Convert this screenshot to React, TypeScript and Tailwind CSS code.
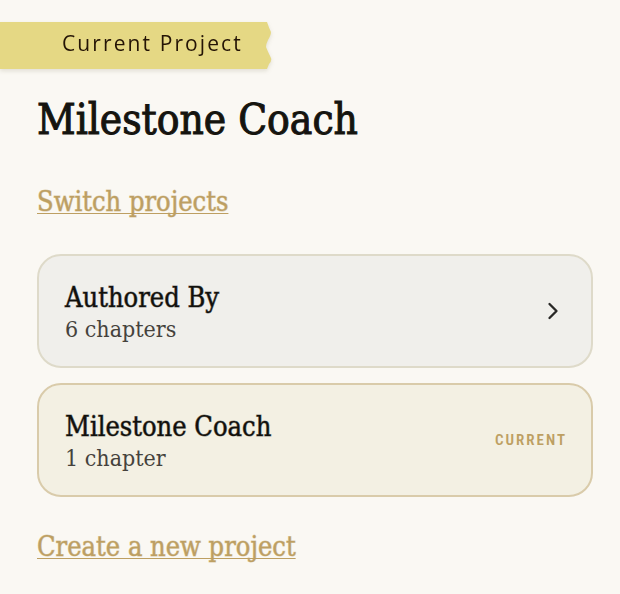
import { ChevronRight } from "lucide-react";

const serif = "font-['DejaVu_Serif_Condensed','DejaVu_Serif',serif]";

const linkClass =
  "self-start text-[27px] leading-9 text-[#bd9f62] underline decoration-[#bd9f62] decoration-1 underline-offset-2 [text-decoration-skip-ink:none] [-webkit-text-stroke:1px_#bd9f6280]";

type Project = { name: string; chapters: string; current: boolean };

const projects: Project[] = [
  { name: "Authored By", chapters: "6 chapters", current: false },
  { name: "Milestone Coach", chapters: "1 chapter", current: true },
];

function Tape() {
  return (
    <div className="grid h-12 w-[272px] items-center drop-shadow-[0_2px_2px_rgba(90,80,40,0.15)]">
      <svg
        className="col-start-1 row-start-1 h-12 w-full"
        viewBox="0 0 272 48"
        preserveAspectRatio="none"
        aria-hidden="true"
      >
        <path d="M0 0H267Q269 6 271 10Q271 13 268 18Q266 22 266 25Q268 30 271 36Q272 39 269 42L267 47H0Z" fill="#e5d884" />
      </svg>
      <p className="z-10 col-start-1 row-start-1 pb-1 pl-[62px] font-['Open_Sans',sans-serif] text-[21px] font-medium tracking-widest text-[#241405]">
        Current Project
      </p>
    </div>
  );
}

function ProjectCard({ project }: { project: Project }) {
  return (
    <button
      type="button"
      className={
        project.current
          ? "flex w-full items-center justify-between rounded-3xl border-2 border-[#d9cbaa] bg-[#f3f0e3] py-6 pr-6 pl-[26px] text-left"
          : "flex w-full items-center justify-between rounded-3xl border-2 border-[#dedac9] bg-[#f0efeb] py-6 pr-6 pl-[26px] text-left"
      }
    >
      <span className="flex flex-col">
        <span className="text-[27px] leading-9 text-[#11100c] [-webkit-text-stroke:1px_#11100c80]">
          {project.name}
        </span>
        <span className="text-[23px] leading-[26px] text-[#45423c]">{project.chapters}</span>
      </span>
      {project.current ? (
        <span className="font-['Liberation_Sans_Narrow','Roboto_Condensed','Roboto',sans-serif] text-[15px] font-semibold tracking-[2px] text-[#bd9f62]">
          CURRENT
        </span>
      ) : (
        <ChevronRight className="size-7 text-[#292826]" strokeWidth={2} aria-hidden="true" />
      )}
    </button>
  );
}

export default function App() {
  return (
    <main className={`min-h-screen bg-[#faf8f3] pt-[22px] ${serif}`}>
      <Tape />
      <div className="flex flex-col pr-[27px] pl-[37px]">
        <h1 className="mt-[25px] text-[42px] leading-[50px] text-[#15140f] [-webkit-text-stroke:1px_#15140f]">
          Milestone Coach
        </h1>
        <a href="#projects" className={`mt-[39px] ${linkClass}`}>
          Switch projects
        </a>
        <div id="projects" className="mt-[34px] flex flex-col gap-[15px]">
          {projects.map((project) => (
            <ProjectCard key={project.name} project={project} />
          ))}
        </div>
        <a href="#new" className={`mt-8 ${linkClass}`}>
          Create a new project
        </a>
      </div>
    </main>
  );
}
